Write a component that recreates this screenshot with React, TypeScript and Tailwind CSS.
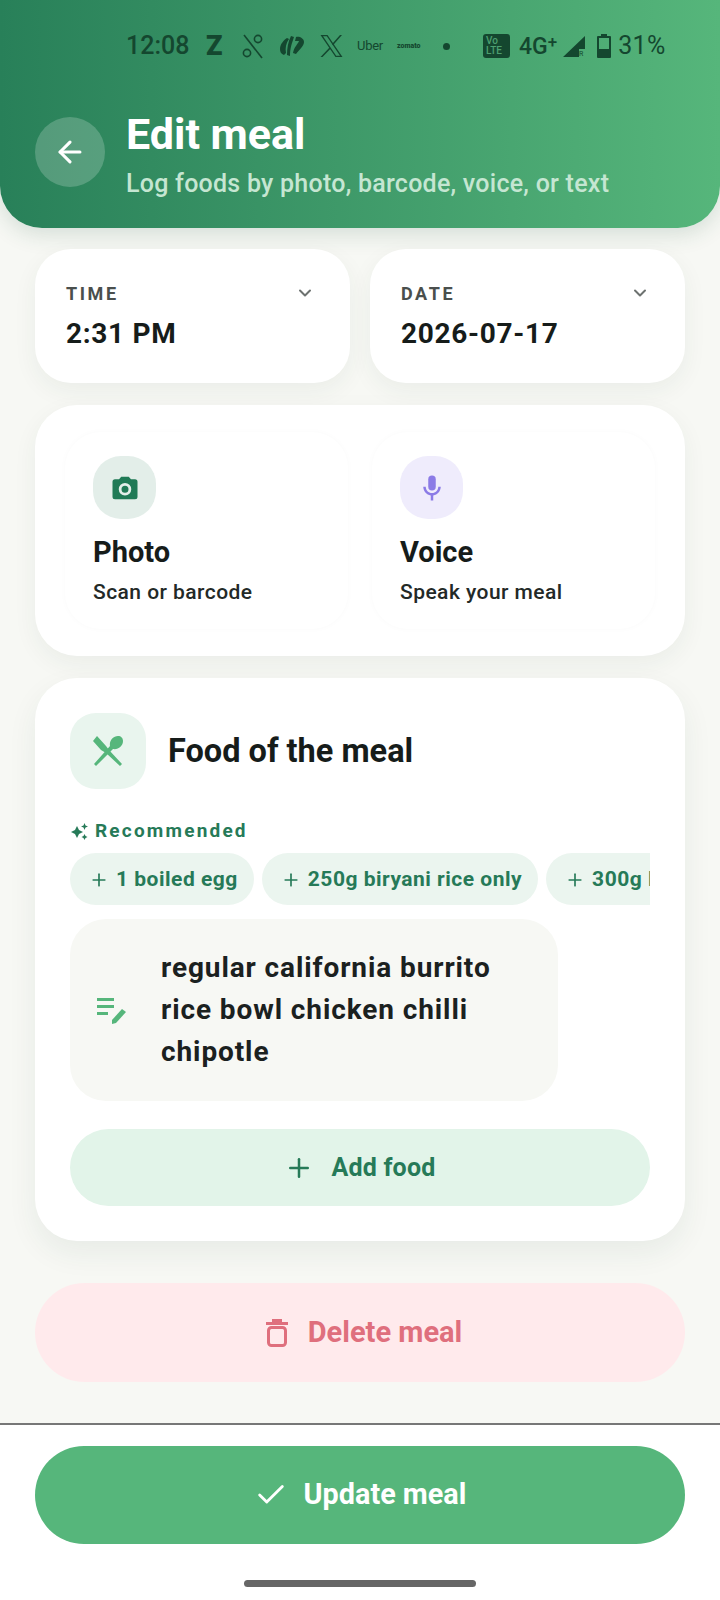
import React from 'react';
import { ArrowLeft, ChevronDown, Plus, Check } from 'lucide-react';

const chips = ['1 boiled egg', '250g biryani rice only', '300g low fat paneer'];

function StatusBar() {
  return (
    <div className="flex items-center h-[30px] pl-[126px] text-[#14472f]">
      <span className="text-[25px] font-medium w-[61px]">12:08</span>
      <span className="ml-[19px] text-[27px] font-black w-[18px] leading-none">Z</span>
      <svg className="ml-[17px]" width="24" height="26" viewBox="0 0 24 26" fill="none" stroke="currentColor" strokeWidth="1.6">
        <path d="M3 2 L21 25" />
        <circle cx="17" cy="6" r="3.6" />
        <circle cx="6" cy="20" r="3.6" />
      </svg>
      <svg className="ml-[14px]" width="25" height="22" viewBox="0 0 25 22" fill="currentColor">
        <path d="M1 14 C1 9 5 5 8 3 L10 4 C7 8 6 13 7 18 L5 20 C2 19 1 17 1 14Z" />
        <path d="M12 1 L15 2 C13 8 11 13 11 21 L8 20 C8 13 9 7 12 1Z" />
        <path d="M17 2 C20 1 25 3 25 7 C25 11 20 15 17 19 L14 18 C15 12 19 9 20 6 L16 6 Z" />
      </svg>
      <svg className="ml-[15px]" width="25" height="24" viewBox="0 0 24 24" fill="currentColor">
        <path d="M1 1 H8 L23 23 H16 Z M3.5 2.2 L16.7 21.8 H20.5 L7.3 2.2 Z" fillRule="evenodd" />
        <path d="M20.5 1 H22.5 L13.5 11.2 L12.6 10 Z M10 13.5 L11 14.8 L3 23 H1 Z" />
      </svg>
      <span className="ml-[13px] text-[13px] w-[29px] tracking-[-0.3px]">Uber</span>
      <span className="ml-[11px] text-[7px] font-black w-[25px]">zomato</span>
      <span className="ml-[21px] w-[7px] h-[7px] rounded-full bg-[#14472f]" />
      <span className="ml-[33px] w-[27px] h-[24px] rounded-[3px] bg-[#14472f] text-[#4d9f70] text-[10px] leading-[10px] font-medium px-[3px] flex flex-col justify-center">
        <span>Vo</span>
        <span>LTE</span>
      </span>
      <span className="ml-[9px] text-[23px] font-medium leading-none">4G</span>
      <span className="text-[17px] font-medium leading-none -mt-[8px]">+</span>
      <svg className="ml-[6px]" width="22" height="21" viewBox="0 0 22 21" fill="currentColor">
        <path d="M22 0 V13 H16 V21 H0 Z" />
        <text x="16" y="20" fontSize="7" fontFamily="Roboto">R</text>
      </svg>
      <svg className="ml-[12px]" width="14" height="24" viewBox="0 0 14 24" fill="currentColor">
        <path d="M4 0 H10 V2 H13 A1 1 0 0 1 14 3 V23 A1 1 0 0 1 13 24 H1 A1 1 0 0 1 0 23 V3 A1 1 0 0 1 1 2 H4 Z M2 4 V15 H12 V4 Z" fillRule="evenodd" />
      </svg>
      <span className="ml-[7px] text-[25px] tracking-[0.3px]">31%</span>
    </div>
  );
}

function PickerCard({ label, value }: { label: string; value: string }) {
  return (
    <div className="flex-1 h-[134px] rounded-[36px] bg-white shadow-[0_8px_24px_rgba(30,70,50,0.06)] pl-[31px] pr-[35px] pt-[31px]">
      <div className="flex items-center justify-between h-[26px]">
        <span className="text-[18px] font-bold tracking-[2.6px] text-[#4a4f4d]">{label}</span>
        <ChevronDown size={20} strokeWidth={2.4} className="text-[#6d7270]" />
      </div>
      <div className="mt-[10px] text-[28px] leading-[36px] font-bold tracking-[0.7px] text-[#161c1a]">{value}</div>
    </div>
  );
}

function LogOption({ title, sub, icon, tint }: { title: string; sub: string; icon: React.ReactNode; tint: string }) {
  return (
    <div className="flex-1 rounded-[36px] bg-white shadow-[0_0_6px_rgba(30,70,50,0.025)] pl-[28px] pt-[24px]">
      <div className={`w-[63px] h-[63px] rounded-[28px] flex items-center justify-center ${tint}`}>{icon}</div>
      <div className="mt-[15px] text-[29px] leading-[36px] font-bold text-[#161c1a]">{title}</div>
      <div className="mt-[8px] text-[21px] leading-[28px] font-medium tracking-[0.45px] text-[#232927]">{sub}</div>
    </div>
  );
}

export default function App() {
  return (
    <div className="w-[720px] h-[1600px] flex flex-col bg-[#f7f8f4] overflow-hidden font-['Roboto',sans-serif]">
      <div className="h-[228px] shrink-0 rounded-b-[42px] bg-gradient-to-r from-[#288059] to-[#56b67b] pt-[31px] shadow-[0_6px_22px_rgba(30,90,60,0.16)]">
        <StatusBar />
        <div className="flex items-center pl-[35px] mt-[48px]">
          <div className="w-[70px] h-[70px] rounded-full bg-white/20 flex items-center justify-center mb-[6px]">
            <ArrowLeft size={34} strokeWidth={2.2} className="text-white" />
          </div>
          <div className="ml-[21px]">
            <div className="text-[43px] leading-[50px] font-bold text-white">Edit meal</div>
            <div className="mt-[8px] text-[25px] leading-[34px] font-medium tracking-[0.25px] text-[#c5e6d2]">Log foods by photo, barcode, voice, or text</div>
          </div>
        </div>
      </div>

      <div className="flex-1 flex flex-col px-[35px] pt-[21px]">
        <div className="flex gap-[20px]">
          <PickerCard label="TIME" value="2:31 PM" />
          <PickerCard label="DATE" value="2026-07-17" />
        </div>

        <div className="mt-[22px] h-[251px] rounded-[42px] bg-white shadow-[0_8px_24px_rgba(30,70,50,0.06)] px-[30px] py-[27px] flex gap-[24px]">
          <LogOption
            title="Photo"
            sub="Scan or barcode"
            tint="bg-[#e3eee9]"
            icon={
              <svg width="30" height="30" viewBox="0 0 24 24" fill="#207a56">
                <path fillRule="evenodd" d="M9 3 H15 L16.8 5 H20 A2 2 0 0 1 22 7 V19 A2 2 0 0 1 20 21 H4 A2 2 0 0 1 2 19 V7 A2 2 0 0 1 4 5 H7.2 Z M12 8 A5 5 0 1 0 12 18 A5 5 0 1 0 12 8 Z M12 10.2 A2.8 2.8 0 1 1 12 15.8 A2.8 2.8 0 1 1 12 10.2 Z" />
              </svg>
            }
          />
          <LogOption
            title="Voice"
            sub="Speak your meal"
            tint="bg-[#efecfc]"
            icon={
              <svg width="30" height="30" viewBox="0 0 24 24" fill="#8b7be6">
                <path d="M12 14 a3 3 0 0 0 3-3 V5 a3 3 0 0 0-6 0 v6 a3 3 0 0 0 3 3 Z" />
                <path d="M17 11 c0 2.8-2.2 5-5 5 s-5-2.2-5-5 H5 c0 3.5 2.6 6.4 6 6.9 V22 h2 v-4.1 c3.4-.5 6-3.4 6-6.9 Z" />
              </svg>
            }
          />
        </div>

        <div className="mt-[22px] h-[563px] rounded-[42px] bg-white shadow-[0_12px_30px_rgba(30,70,50,0.07)] px-[35px] pt-[35px]">
          <div className="flex items-center">
            <div className="w-[76px] h-[76px] rounded-[26px] bg-[#e9f5ee] flex items-center justify-center">
              <svg width="32" height="32" viewBox="0 0 32 32" fill="#56b67b">
                <path d="M1 6 L5 1 L14 11 L17 15 L30 29 L28 31 L14 18 L9 15 Z" />
                <path d="M31 6 C31 11 26 15 21 14 L4 31 L2 29 L18 11 C17 6 21 1 26 1 C29 1 31 3 31 6Z" />
              </svg>
            </div>
            <div className="ml-[22px] text-[32.5px] font-bold text-[#161c1a]">Food of the meal</div>
          </div>

          <div className="mt-[30px] flex items-center h-[24px] text-[#267a58]">
            <svg width="19" height="19" viewBox="0 0 19 19" fill="currentColor">
              <path d="M7 4 L9 8 L13 10 L9 12 L7 16 L5 12 L1 10 L5 8 Z" />
              <path d="M14.5 1 L15.5 3.5 L18 4.5 L15.5 5.5 L14.5 8 L13.5 5.5 L11 4.5 L13.5 3.5 Z" />
              <path d="M14.5 12 L15.5 14 L17.5 15 L15.5 16 L14.5 18 L13.5 16 L11.5 15 L13.5 14 Z" />
            </svg>
            <span className="ml-[6px] text-[19px] font-bold tracking-[2.2px]">Recommended</span>
          </div>

          <div className="mt-[10px] flex gap-[8px] overflow-hidden w-[580px]">
            {chips.map((chip) => (
              <div key={chip} className="shrink-0 h-[52px] rounded-full bg-[#ebf5ef] pl-[19px] pr-[16px] pt-[1px] flex items-center text-[#267a58] text-[21px] font-bold tracking-[0.5px]">
                <Plus size={20} strokeWidth={2} className="mr-[7px]" />
                {chip}
              </div>
            ))}
          </div>

          <div className="mt-[14px] w-[488px] h-[182px] rounded-[36px] bg-[#f7f8f4] flex items-center pl-[27px]">
            <svg width="30" height="30" viewBox="0 0 30 30" fill="#56b67b" className="shrink-0">
              <path d="M0 3 H17 V6 H0 Z M0 10 H17 V13 H0 Z M0 17 H11 V20 H0 Z" />
              <path d="M15 25 L25 14 L29 17 L19 28 L15 29 Z" />
            </svg>
            <div className="ml-[34px] w-[370px] text-[28px] leading-[42px] font-bold tracking-[0.9px] text-[#1b211f]">
              regular california burrito rice bowl chicken chilli chipotle
            </div>
          </div>

          <div className="mt-[28px] h-[77px] rounded-full bg-[#e2f4e9] flex items-center justify-center text-[#267a58]">
            <Plus size={30} strokeWidth={2} />
            <span className="ml-[17px] text-[25px] font-bold tracking-[0.2px]">Add food</span>
          </div>
        </div>

        <div className="mt-[42px] h-[99px] shrink-0 rounded-full bg-[#ffeaec] pl-[8px] flex items-center justify-center text-[#df6f7d]">
          <svg width="22" height="28" viewBox="0 0 22 28" fill="none" stroke="currentColor" strokeWidth="3">
            <path d="M0 4.5 H22" />
            <path d="M6 1.5 H16" />
            <rect x="2.5" y="8.5" width="17" height="18" rx="3" />
          </svg>
          <span className="ml-[20px] text-[29px] font-bold">Delete meal</span>
        </div>
      </div>

      <div className="h-[177px] shrink-0 bg-white border-t-2 border-[#777777] px-[35px] pt-[21px] flex flex-col">
        <div className="h-[98px] rounded-full bg-[#56b67b] flex items-center justify-center text-white">
          <Check size={34} strokeWidth={2} />
          <span className="ml-[16px] text-[28.8px] font-bold">Update meal</span>
        </div>
        <div className="mt-[36px] self-center w-[232px] h-[7px] rounded-full bg-[#666666]" />
      </div>
    </div>
  );
}
